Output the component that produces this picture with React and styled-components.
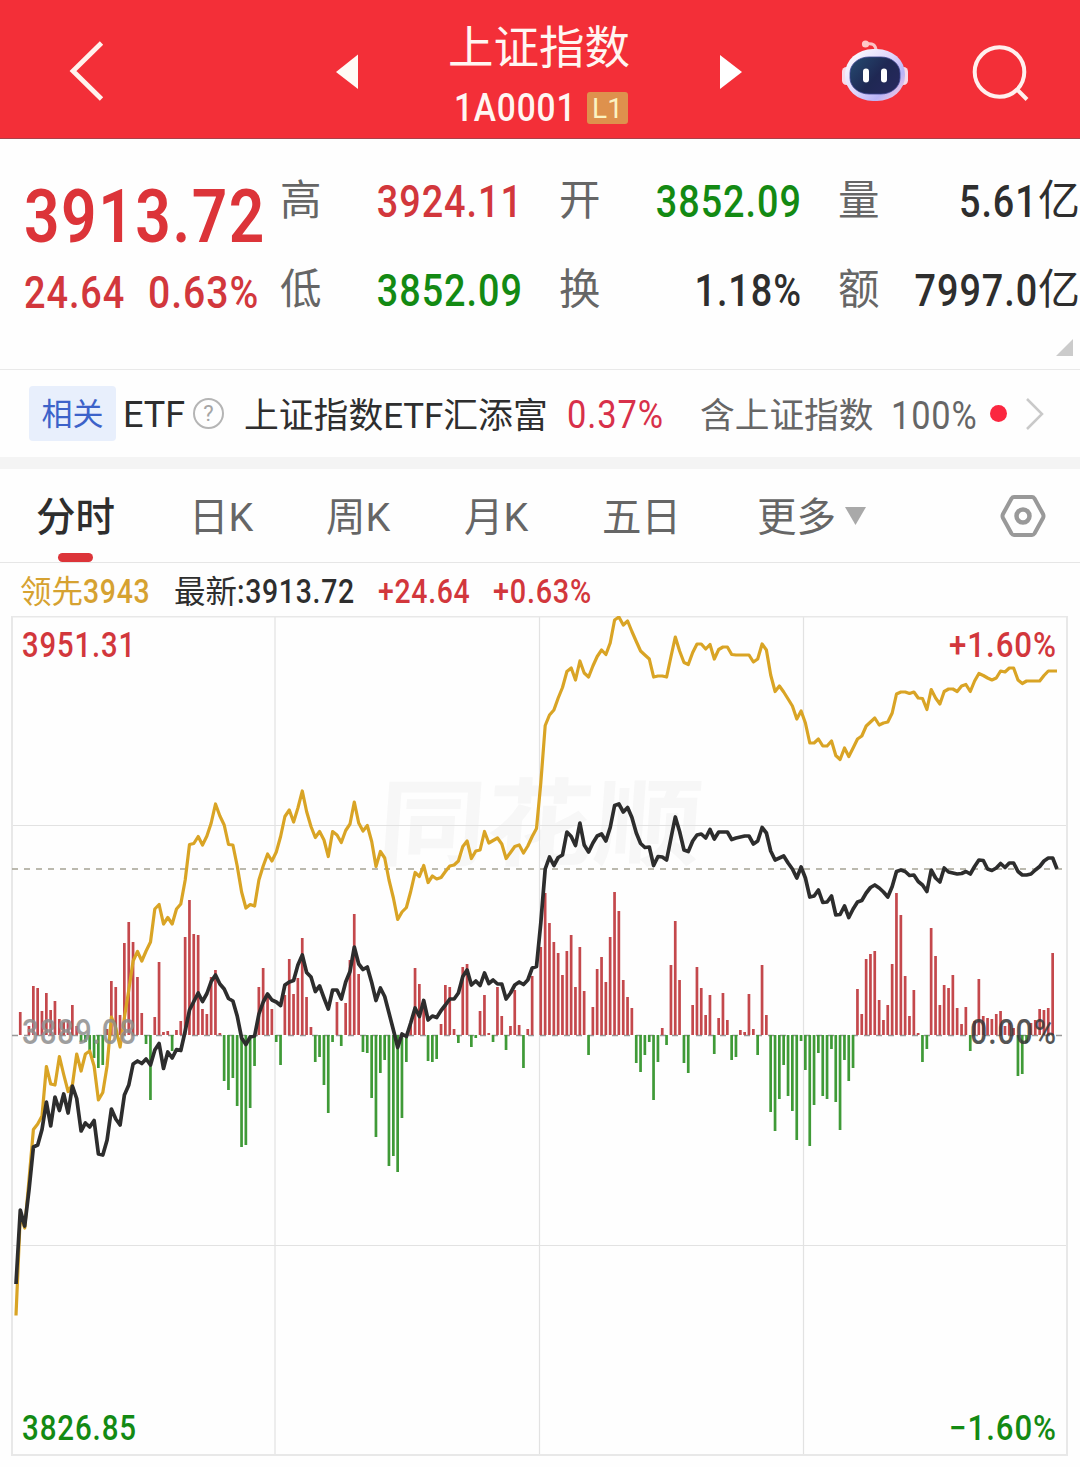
import React from 'react';
import styled, { createGlobalStyle } from 'styled-components';

const RED = '#d2373c';
const GREEN = '#138a13';
const DARK = '#2e2e2e';
const GREY = '#666666';

const GlobalStyle = createGlobalStyle`
  * {
    box-sizing: border-box;
  }
  body {
    margin: 0;
    background: #fefefe;
    font-family: Roboto, 'Noto Sans CJK SC', sans-serif;
    color: ${DARK};
  }
`;

const Page = styled.div`
  width: 1080px;
  height: 1467px;
  overflow: hidden;
`;

/* condensed figures, the box keeps its own width so the siblings line up */
const Figure = styled.span`
  display: inline-block;
  flex: none;
  width: ${({ $width }) => ($width ? `${$width}px` : 'auto')};
  font-size: ${({ $size }) => $size}px;
  font-weight: ${({ $weight }) => $weight || 500};
  line-height: 1;
  letter-spacing: 0.025em;
  white-space: nowrap;
  color: ${({ $color }) => $color || 'inherit'};
  transform: scaleX(${({ $scale }) => $scale || 0.86});
  transform-origin: ${({ $origin }) => $origin || 'left'} center;
`;

const Header = styled.header`
  display: flex;
  align-items: center;
  height: 139px;
  padding: 4px 50px 0 68px;
  color: #fff6f2;
  background: #f32f38;
  border-bottom: 1px solid #a9424b;
`;

const BackIcon = styled.svg`
  flex: none;
  width: 36px;
  height: 60px;
  margin-right: 231px;
`;

const Triangle = styled.svg`
  flex: none;
  width: 24px;
  height: 36px;
`;

const Title = styled.div`
  display: flex;
  flex-direction: column;
  align-items: center;
  width: 361px;
  padding-top: 10px;
`;

const IndexName = styled.h1`
  margin: 0;
  height: 64px;
  font-size: 45.5px;
  font-weight: 400;
  line-height: 64px;
`;

const IndexCode = styled.div`
  display: flex;
  align-items: center;
  height: 54px;
  padding-left: 4px;
`;

const LevelBadge = styled.span`
  display: flex;
  align-items: center;
  justify-content: center;
  width: 41px;
  height: 32px;
  margin-left: 1px;
  border-radius: 3px;
  font-size: 28px;
  color: #fbf3c2;
  background: #de914d;
`;

const RobotIcon = styled.svg`
  flex: none;
  width: 68px;
  height: 64px;
  margin-left: 98px;
`;

const SearchIcon = styled.svg`
  flex: none;
  width: 58px;
  height: 58px;
  margin: 1px 0 0 63px;
`;

const Quote = styled.section`
  display: flex;
  position: relative;
  height: 231px;
  padding: 18px 0 0 24px;
  border-bottom: 1px solid #e9e9e9;
`;

const Price = styled.div`
  display: flex;
  flex-direction: column;
  width: 256px;
  padding-top: 22px;
`;

const Change = styled.div`
  display: flex;
  margin-top: 17px;
`;

const StatGrid = styled.div`
  display: grid;
  grid-template-columns: 243px 243px 242px;
  grid-auto-rows: 89px;
  column-gap: 36px;
`;

const Stat = styled.div`
  display: flex;
  align-items: center;
  justify-content: space-between;
`;

const StatLabel = styled.span`
  padding-bottom: 1px;
  font-size: 41.5px;
  line-height: 1;
  color: ${GREY};
`;

const StatValue = styled.span`
  display: flex;
  align-items: center;
  justify-content: flex-end;
  flex: 1;
  line-height: 1;
  color: ${({ $color }) => $color};
`;

const Unit = styled.span`
  padding-bottom: 1px;
  font-size: 42px;
`;

const Corner = styled.span`
  position: absolute;
  right: 7px;
  bottom: 13px;
  border-bottom: 17px solid #cbcbcb;
  border-left: 17px solid transparent;
`;

const EtfBar = styled.section`
  display: flex;
  align-items: center;
  height: 87px;
  padding-left: 29px;
  white-space: nowrap;
`;

const Chip = styled.span`
  flex: none;
  width: 87px;
  height: 55px;
  border-radius: 4px;
  font-size: 31px;
  line-height: 58px;
  text-align: center;
  color: #3c62c9;
  background: #e8effc;
`;

const EtfWord = styled.span`
  flex: none;
  width: 69px;
  padding: 2px 0 0 7px;
  font-size: 36px;
`;

const Help = styled.span`
  display: flex;
  align-items: center;
  justify-content: center;
  flex: none;
  width: 31px;
  height: 31px;
  margin: 0 20px 0 8px;
  border: 2px solid #b5b5b5;
  border-radius: 50%;
  font-size: 22px;
  color: #a5a5a5;
`;

const EtfName = styled.span`
  flex: none;
  width: 323px;
  padding-bottom: 1px;
  font-size: 34.8px;
`;

const EtfNote = styled.span`
  flex: none;
  width: 191px;
  padding-bottom: 1px;
  font-size: 34.7px;
  color: ${GREY};
`;

const EtfFigure = styled(Figure)`
  padding-top: 4px;
`;

const Dot = styled.i`
  flex: none;
  width: 17px;
  height: 17px;
  border-radius: 50%;
  background: #fb2740;
`;

const MoreIcon = styled.svg`
  flex: none;
  width: 20px;
  height: 34px;
  margin-left: 18px;
`;

const Divider = styled.div`
  height: 12px;
  background: #f4f4f4;
`;

const Tabs = styled.nav`
  display: grid;
  grid-template-columns: 153px 137px 138px 138px 155px 243px 46px;
  align-items: center;
  height: 94px;
  padding-left: 36px;
  border-bottom: 1px solid #e6e6e6;
`;

const Tab = styled.div`
  position: relative;
  height: 94px;
  font-size: 39.5px;
  font-weight: ${({ $active }) => ($active ? 500 : 400)};
  line-height: 97px;
  white-space: nowrap;
  color: ${({ $active }) => ($active ? DARK : GREY)};

  &::after {
    content: '';
    display: ${({ $active }) => ($active ? 'block' : 'none')};
    position: absolute;
    left: 22px;
    bottom: 1px;
    width: 35px;
    height: 9px;
    border-radius: 5px;
    background: #dc3439;
  }
`;

const Caret = styled.svg`
  width: 21px;
  height: 18px;
  margin-left: 9px;
  vertical-align: 6px;
`;

const SettingsIcon = styled.svg`
  width: 46px;
  height: 44px;
`;

const Legend = styled.div`
  display: flex;
  align-items: center;
  height: 53px;
  padding: 3px 0 0 20px;
  font-size: 31.5px;
  line-height: 1;
  white-space: nowrap;
`;

const LegendItem = styled.div`
  display: flex;
  align-items: center;
  flex: none;
  width: ${({ $width }) => $width}px;
  color: ${({ $color }) => $color};
`;

const LegendName = styled.span`
  padding-top: 3px;
`;

const Chart = styled.svg`
  display: block;
  width: 1080px;
  height: 851px;
`;

const ChartLabel = styled.text`
  font-family: Roboto, sans-serif;
  font-size: 35px;
  font-weight: 500;
  letter-spacing: 0.03em;
`;

const Watermark = styled.text`
  font-family: 'Noto Sans CJK SC', sans-serif;
  font-size: 95px;
  font-weight: 700;
  fill: #f7f7f7;
`;

const stats = [
  { label: '高', value: '3924.11', color: RED },
  { label: '开', value: '3852.09', color: GREEN },
  { label: '量', value: '5.61', unit: '亿', color: DARK },
  { label: '低', value: '3852.09', color: GREEN },
  { label: '换', value: '1.18%', color: DARK },
  { label: '额', value: '7997.0', unit: '亿', color: DARK },
];

const tabs = ['分时', '日K', '周K', '月K', '五日', '更多'];

// one entry per minute, 240 trading minutes
const BASE = 1035;
const START = 16;
const STEP = 4.3375;

const volume = [
  0, 23, 0, 9, 49, 47, 24, 42, 25, 34, 16, 13, 15, 30, 9, -7, -7, -15, -23, -33,
  -30, 6, 54, 48, 20, 92, 113, 93, 58, 22, -9, -65, 18, 73, 3, 4, -16, 5, 14, 98,
  135, 101, 100, 26, 21, 58, 65, 2, -46, -55, -43, -71, -112, -110, -73, -31, 48, 67, 40, 26,
  -7, -30, 40, 76, 41, 57, 97, 38, 8, -27, -22, -50, -78, -7, 33, -11, 32, 75, 121, 61,
  -17, -18, -63, -102, -38, -25, -131, -121, -137, -83, -27, 10, 67, 51, 36, -26, -27, -24, 11, 50,
  48, 6, -8, 68, 71, -12, -3, 24, 40, 2, -7, 48, 19, -15, 9, 45, 10, -33, 6, 59,
  0, 88, 142, 112, 93, 82, 60, 84, 100, 48, 88, 44, -20, 28, 66, 78, 53, 98, 143, 124,
  55, 38, 27, -28, -37, -20, -7, -65, -27, 7, -10, 70, 114, 55, -28, -38, 30, 68, 47, 20,
  40, -19, 17, 42, 15, -25, -22, 5, 3, 41, 6, -20, 70, 20, -77, -96, -64, -30, -61, -76,
  -105, -6, -35, -111, -70, -18, -61, -64, -14, -67, -95, -25, -46, -33, 46, 21, 76, 81, 84, 35,
  15, 30, 71, 142, 120, 59, 19, 45, 2, -27, -14, 107, 79, 30, 50, 47, 60, 27, 11, 28,
  -16, 14, 56, 19, 17, 16, 21, 24, 9, 12, 7, -41, -39, -8, 12, 15, 26, 25, 27, 82,
];

const price = [
  1284, 1210, 1226, 1190, 1147, 1145, 1129.5, 1102, 1126, 1097, 1110.5, 1094, 1113, 1086, 1098.5, 1131, 1123, 1127, 1120.5, 1154,
  1155, 1140, 1109, 1119, 1125, 1095, 1085, 1064, 1061, 1063.5, 1059, 1065, 1050, 1043.5, 1068.5, 1052, 1058, 1049.5, 1050.5, 1031,
  1010, 1001.5, 993, 1001.5, 993.5, 981.5, 975, 984, 989, 998.5, 1001, 1016, 1038, 1044.5, 1037, 1036, 1014, 1002, 994, 1000,
  1002, 1005.5, 985, 982, 980.5, 965, 955, 972.5, 977, 991.5, 986, 998, 1009, 990, 990, 999, 982, 971.5, 947, 964,
  969.5, 967, 982.5, 1000.5, 988, 996.5, 1013, 1030, 1047.5, 1034, 1036.5, 1023, 1008, 1016.5, 1000.5, 1020, 1016, 1017.5, 1010.5, 1005,
  999, 999, 993, 976.5, 970, 985, 981, 985.5, 973, 983.5, 980, 984, 984, 999, 993, 985, 982, 984.5, 980, 968,
  966.5, 923, 869, 857, 865.5, 857.5, 855, 832, 836.5, 845.5, 823, 845, 852, 843, 836, 834, 841, 827.5, 805.5, 804,
  812, 807.5, 817.5, 833, 843.5, 847.5, 847, 865.5, 856.5, 857, 860, 838, 817, 831.5, 850, 851.5, 841, 835, 834, 838,
  829.5, 839, 832, 832, 832, 839.5, 838, 837, 836, 836, 844, 841, 827.5, 833, 851, 860, 858, 856, 863, 869,
  878, 867, 878, 897, 896, 890, 902.5, 902, 896, 915, 914.5, 906, 917.5, 909, 902, 900.5, 893, 887.5, 885, 888,
  892, 897, 886.5, 871.5, 870, 871.5, 875.5, 875, 881.5, 885, 891.5, 870, 878, 882, 868, 872, 873, 874, 873.5, 871.5,
  874, 866.5, 860, 860.5, 869, 870.5, 868, 863.5, 867.5, 863, 863, 871.5, 875, 875, 874, 870, 866.5, 861, 858, 858,
  869,
];

const leading = [
  1315.5, 1215, 1228, 1180, 1129.5, 1124, 1116, 1066.5, 1084, 1085, 1056.5, 1074.5, 1091.5, 1085, 1054, 1071, 1054, 1051, 1066, 1100,
  1092.5, 1066, 1017, 1028, 1047, 1017.5, 990, 961, 951.5, 961, 951, 942, 909, 904.5, 924, 917.5, 924, 909, 904, 880,
  844.5, 843.5, 836.5, 845, 836, 823, 804, 816, 825, 844.5, 845, 866, 892, 908, 904.5, 906, 880, 866, 854, 861,
  852, 836.5, 816.5, 810, 822, 808, 791, 811.5, 826.5, 837.5, 831.5, 840, 856.5, 831.5, 835, 842.5, 830.5, 824, 802, 823,
  831, 825.5, 841.5, 866.5, 851.5, 858, 880, 898, 919.5, 912, 907.5, 891.5, 872.5, 876.5, 865.5, 882.5, 876, 879, 877.5, 871.5,
  866, 865, 861, 846.5, 841, 858.5, 851, 850, 831.5, 843, 840.5, 838, 844, 858.5, 852.5, 846.5, 845, 853, 846, 836.5,
  828.5, 783, 725.5, 715, 710, 698, 687.5, 671.5, 668, 680, 661, 673, 677, 666, 656.5, 650, 654.5, 643, 620, 617,
  625, 621, 631.5, 641.5, 651, 655, 659, 677, 676, 676, 677, 656.5, 637, 651, 662.5, 664.5, 652.5, 644, 644, 649,
  644.5, 659, 649.5, 647, 647, 654.5, 655, 655, 655, 655, 662, 659, 644, 650, 675, 691.5, 686, 692, 699, 706,
  719, 711, 723, 743, 743, 739, 746, 746, 741, 755.5, 759.5, 748, 756.5, 748, 739, 736, 726, 722, 718, 725,
  723, 722, 713, 694, 692, 692, 693.5, 692, 698, 698.5, 709.5, 689.5, 698, 704, 691.5, 689, 689, 691.5, 686, 684.5,
  691.5, 681, 673.5, 675.5, 678, 680, 678, 671, 672, 668, 668, 680, 683.5, 681, 681, 681, 681, 675.5, 671, 671,
  671,
];

const toX = (index) => (START + index * STEP).toFixed(1);
const toPoints = (series) => series.map((y, index) => `${toX(index)},${y}`).join(' ');

const Robot = () => (
  <RobotIcon viewBox="841 39 68 64" fill="none">
    <defs>
      <linearGradient id="shell" x1="850" y1="50" x2="900" y2="100" gradientUnits="userSpaceOnUse">
        <stop offset="0" stopColor="#ffffff" />
        <stop offset="0.5" stopColor="#dcd3fb" />
        <stop offset="0.75" stopColor="#b9b3f6" />
        <stop offset="1" stopColor="#fbc9dc" />
      </linearGradient>
      <linearGradient id="visor" x1="855" y1="60" x2="895" y2="95" gradientUnits="userSpaceOnUse">
        <stop offset="0" stopColor="#24456c" />
        <stop offset="0.5" stopColor="#1f2853" />
        <stop offset="1" stopColor="#27285e" />
      </linearGradient>
    </defs>
    <path d="M866 44 Q876 42 876 51" stroke="#fbc3c6" strokeWidth="3" />
    <circle cx="865.5" cy="44" r="3.6" fill="#ffc9c9" />
    <rect x="842" y="67" width="9" height="18" rx="4.5" fill="#f7dbe9" />
    <rect x="899" y="67" width="9" height="18" rx="4.5" fill="#f7dbe9" />
    <rect x="845" y="49" width="60" height="52" rx="28" ry="25" fill="url(#shell)" />
    <rect x="850" y="57" width="50" height="37" rx="19" ry="16" fill="url(#visor)" stroke="#3d4590" strokeWidth="0.8" />
    <rect x="863" y="68.500" width="6" height="14" rx="3" fill="#fff" />
    <rect x="881" y="68.500" width="6" height="14" rx="3" fill="#fff" />
  </RobotIcon>
);

const TopBar = () => (
  <Header>
    <BackIcon viewBox="0 0 36 60" fill="none" stroke="#fff3ee" strokeWidth="4.8">
      <path d="M33.500 2 L5 30 L33.500 58" />
    </BackIcon>
    <Triangle viewBox="0 0 24 36" fill="#fffaf5">
      <path d="M1 19 L23 1.500 V36 Z" />
    </Triangle>
    <Title>
      <IndexName>上证指数</IndexName>
      <IndexCode>
        <Figure $size={38} $width={132} $scale={0.88}>1A0001</Figure>
        <LevelBadge>L1</LevelBadge>
      </IndexCode>
    </Title>
    <Triangle viewBox="0 0 24 36" fill="#fff">
      <path d="M1 2 L23 19 L1 36 Z" />
    </Triangle>
    <Robot />
    <SearchIcon viewBox="972 43 58 58" fill="none" stroke="#fff0ee" strokeWidth="4">
      <circle cx="999.500" cy="72" r="24.800" />
      <path d="M1017 89.500 L1027 99.500" />
    </SearchIcon>
  </Header>
);

const QuotePanel = () => (
  <Quote>
    <Price>
      <Figure $size={75} $color="#dc3439" $width={240} $weight={600} $scale={0.83}>3913.72</Figure>
      <Change>
        <Figure $size={44} $color={RED} $width={124} $scale={0.86}>24.64</Figure>
        <Figure $size={44} $color={RED} $scale={0.89}>0.63%</Figure>
      </Change>
    </Price>
    <StatGrid>
      {stats.map(({ label, value, unit, color }) => (
        <Stat key={label}>
          <StatLabel>{label}</StatLabel>
          <StatValue $color={color}>
            <Figure $size={45} $scale={0.84} $origin="right">{value}</Figure>
            {unit && <Unit>{unit}</Unit>}
          </StatValue>
        </Stat>
      ))}
    </StatGrid>
    <Corner />
  </Quote>
);

const RelatedEtf = () => (
  <EtfBar>
    <Chip>相关</Chip>
    <EtfWord>ETF</EtfWord>
    <Help>?</Help>
    <EtfName>上证指数ETF汇添富</EtfName>
    <EtfFigure $size={39} $width={133} $weight={400} $scale={0.885} $color="#d8304a">0.37%</EtfFigure>
    <EtfNote>含上证指数</EtfNote>
    <EtfFigure $size={38} $width={99} $weight={400} $scale={0.905} $color={GREY}>100%</EtfFigure>
    <Dot />
    <MoreIcon viewBox="0 0 20 34" fill="none" stroke="#c9c9c9" strokeWidth="2.500">
      <path d="M2 2 L17 17 L2 32" />
    </MoreIcon>
  </EtfBar>
);

const PeriodTabs = () => (
  <Tabs>
    {tabs.map((name, index) => (
      <Tab key={name} $active={index === 0}>
        {name}
        {name === '更多' && (
          <Caret viewBox="0 0 21 18" fill="#a9a9a9">
            <path d="M0 0 H21 L10.500 18 Z" />
          </Caret>
        )}
      </Tab>
    ))}
    <SettingsIcon viewBox="0 0 46 44" fill="none" stroke="#999">
      <path d="M14 3 H32 Q33.500 3 34.500 4.500 L43 20 Q44 22 43 24 L34.500 39.500 Q33.500 41 32 41 H14 Q12.500 41 11.500 39.500 L3 24 Q2 22 3 20 L11.500 4.500 Q12.500 3 14 3 Z" strokeWidth="4" />
      <circle cx="23" cy="22" r="6.500" strokeWidth="4.500" />
    </SettingsIcon>
  </Tabs>
);

const MinuteChart = () => (
  <Chart viewBox="0 616 1080 851">
    <Watermark transform="translate(376 858) skewX(-4)" textLength="324" lengthAdjust="spacingAndGlyphs">
      同花顺
    </Watermark>
    <g stroke="#e2e2e2" strokeWidth="1.200">
      <path d="M275 616 V1455 M539.500 616 V1455 M803.500 616 V1455" />
      <path d="M12 825.500 H1067 M12 1245.500 H1067" />
    </g>
    <rect x="12" y="616.500" width="1055" height="838.500" fill="none" stroke="#e8e8e8" strokeWidth="2" />
    <path d="M12 1035.500 H1067" stroke="#999" strokeWidth="1.300" strokeDasharray="6 6" />
    {volume.map((size, index) => (
      <rect
        key={toX(index)}
        x={toX(index - 0.32)}
        y={size > 0 ? BASE - size : BASE}
        width="2.700"
        height={Math.abs(size)}
        fill={size > 0 ? '#c4484c' : '#3f9a37'}
      />
    ))}
    <path d="M12 869 H1067" stroke="#a5a294" strokeWidth="1.500" strokeDasharray="6 6" />
    <polyline points={toPoints(leading)} fill="none" stroke="#d9a425" strokeWidth="3.200" strokeLinejoin="round" />
    <polyline points={toPoints(price)} fill="none" stroke="#2d2d2d" strokeWidth="3.700" strokeLinejoin="round" />
    <g opacity="0.850">
      <ChartLabel x="22" y="1044" textLength="115" lengthAdjust="spacingAndGlyphs" fill="#8e8e8e">3889.08</ChartLabel>
      <ChartLabel x="970" y="1044" textLength="87" lengthAdjust="spacingAndGlyphs" fill="#383838">0.00%</ChartLabel>
    </g>
    <ChartLabel x="22" y="657" textLength="114" lengthAdjust="spacingAndGlyphs" fill={RED}>3951.31</ChartLabel>
    <ChartLabel x="949" y="657" textLength="108" lengthAdjust="spacingAndGlyphs" fill={RED}>+1.60%</ChartLabel>
    <ChartLabel x="22" y="1440" textLength="115" lengthAdjust="spacingAndGlyphs" fill={GREEN}>3826.85</ChartLabel>
    <ChartLabel x="949" y="1440" textLength="108" lengthAdjust="spacingAndGlyphs" fill={GREEN}>−1.60%</ChartLabel>
  </Chart>
);

const App = () => (
  <>
    <GlobalStyle />
    <Page>
      <TopBar />
      <QuotePanel />
      <RelatedEtf />
      <Divider />
      <PeriodTabs />
      <Legend>
        <LegendItem $width={154} $color="#d6a231">
          <LegendName>领先</LegendName>
          <Figure $size={33}>3943</Figure>
        </LegendItem>
        <LegendItem $width={204} $color={DARK}>
          <LegendName>最新</LegendName>
          <Figure $size={33}>:3913.72</Figure>
        </LegendItem>
        <LegendItem $width={115} $color={RED}>
          <Figure $size={33}>+24.64</Figure>
        </LegendItem>
        <LegendItem $width={115} $color={RED}>
          <Figure $size={33} $scale={0.875}>+0.63%</Figure>
        </LegendItem>
      </Legend>
      <MinuteChart />
    </Page>
  </>
);

export default App;
